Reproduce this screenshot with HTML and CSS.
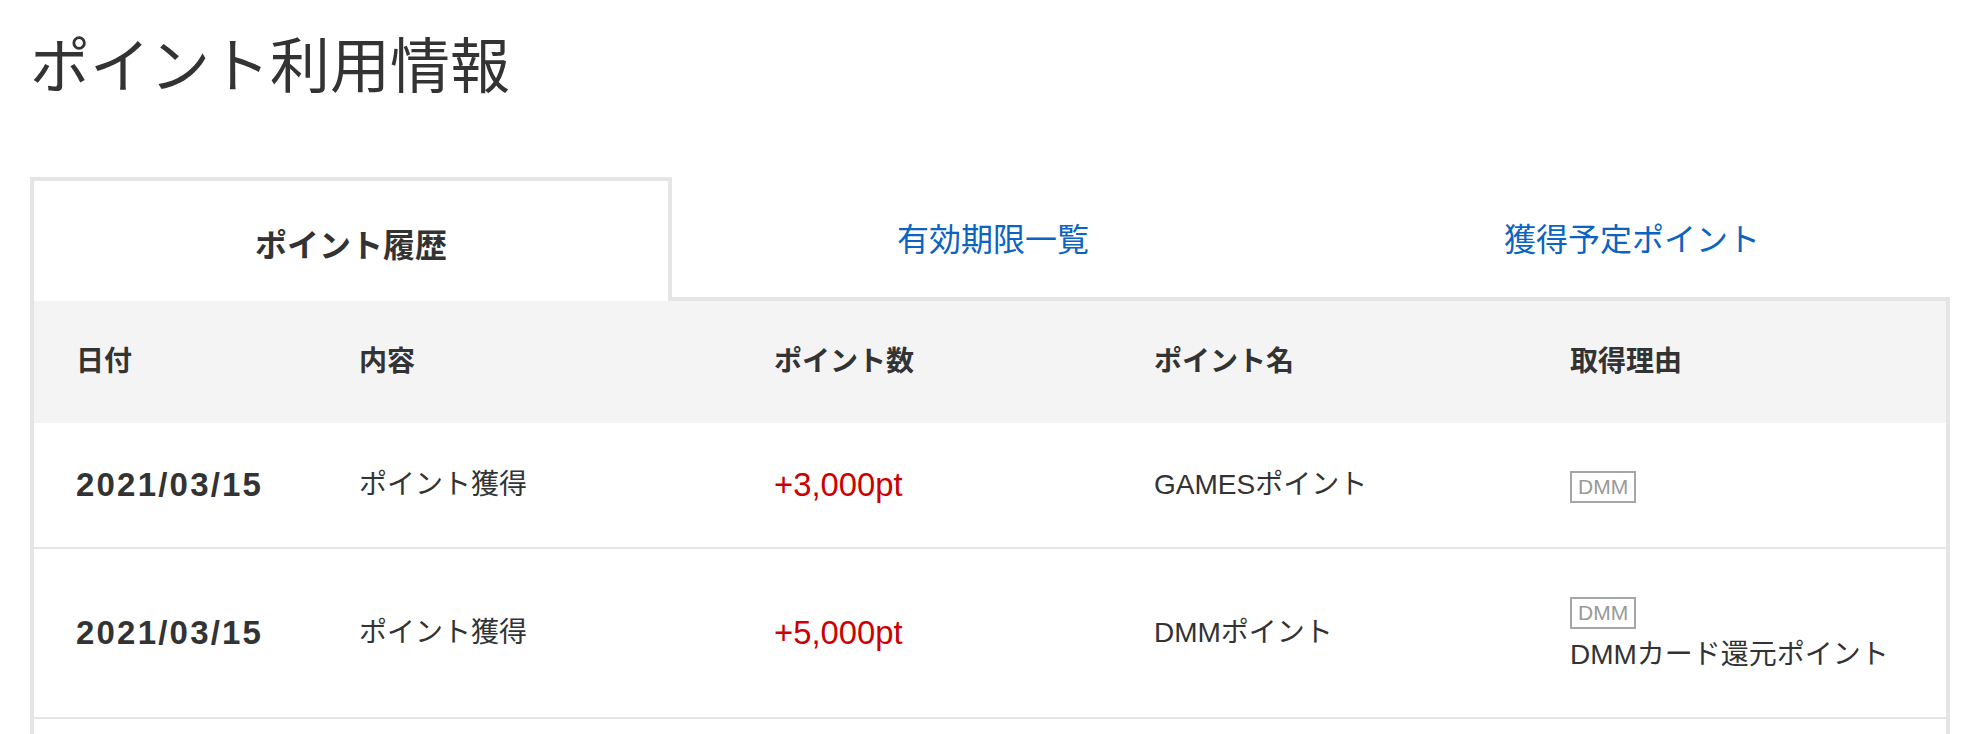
FILE: index.html
```html
<!DOCTYPE html>
<html lang="ja">
<head>
<meta charset="utf-8">
<title>ポイント利用情報</title>
<link rel="stylesheet" href="styles.css">
</head>
<body>
<main class="page">
  <h1 class="title">ポイント利用情報</h1>
  <nav class="tabs">
    <div class="tab tab-active">ポイント履歴</div>
    <a class="tab" href="#">有効期限一覧</a>
    <a class="tab tab-last" href="#">獲得予定ポイント</a>
  </nav>
  <div class="panel">
    <table class="history">
      <colgroup>
        <col class="c-date">
        <col class="c-desc">
        <col class="c-pts">
        <col class="c-name">
        <col class="c-reason">
      </colgroup>
      <thead>
        <tr>
          <th>日付</th>
          <th>内容</th>
          <th>ポイント数</th>
          <th>ポイント名</th>
          <th>取得理由</th>
        </tr>
      </thead>
      <tbody>
        <tr>
          <td class="date">2021/03/15</td>
          <td>ポイント獲得</td>
          <td class="pts">+3,000pt</td>
          <td>GAMESポイント</td>
          <td><span class="badge">DMM</span></td>
        </tr>
        <tr>
          <td class="date">2021/03/15</td>
          <td>ポイント獲得</td>
          <td class="pts">+5,000pt</td>
          <td>DMMポイント</td>
          <td><div class="badge-line"><span class="badge">DMM</span></div>DMMカード還元ポイント</td>
        </tr>
      </tbody>
    </table>
  </div>
</main>
</body>
</html>
```

FILE: styles.css
```css
* {
  box-sizing: border-box;
}

html, body {
  margin: 0;
  padding: 0;
  background: #fff;
}

body {
  font-family: "Liberation Sans", "Noto Sans CJK JP", sans-serif;
  color: #333;
  overflow: hidden;
}

.page {
  width: 1920px;
  margin-left: 30px;
}

.title {
  margin: 23px 0 64px 0;
  font-size: 60px;
  line-height: 90px;
  font-weight: 400;
  color: #333;
}

.tabs {
  display: flex;
  height: 124px;
}

.tab {
  flex: 0 0 642px;
  display: flex;
  align-items: center;
  justify-content: center;
  font-size: 32px;
  color: #0b63c2;
  text-decoration: none;
  border-bottom: 4px solid #e5e5e5;
}

.tab-last {
  flex: 1 1 auto;
}

.tab-active {
  color: #333;
  font-weight: 700;
  border: 4px solid #e5e5e5;
  border-bottom: none;
  padding-top: 4px;
}

.panel {
  border-left: 4px solid #e5e5e5;
  border-right: 4px solid #e5e5e5;
  padding-bottom: 60px;
}

.history {
  width: 100%;
  border-collapse: collapse;
  table-layout: fixed;
}

.c-date { width: 283px; }
.c-desc { width: 415px; }
.c-pts { width: 380px; }
.c-name { width: 416px; }
.c-reason { width: 418px; }

.history th {
  background: #f4f4f4;
  text-align: left;
  font-size: 28px;
  font-weight: 700;
  line-height: 40px;
  padding: 41px 0 41px 42px;
  color: #333;
}

.history td {
  font-size: 28px;
  line-height: 40px;
  padding: 42px 0 42px 42px;
  vertical-align: middle;
  border-bottom: 2px solid #e5e5e5;
  color: #333;
  white-space: nowrap;
}

.history td.date {
  font-size: 33px;
  font-weight: 700;
  letter-spacing: 2.2px;
}

.history td.pts {
  font-size: 32.8px;
  color: #cc0000;
}

.badge-line {
  display: flex;
  align-items: center;
  height: 44px;
}

.badge {
  display: inline-block;
  vertical-align: middle;
  font-size: 21px;
  line-height: 28px;
  padding: 0 6px;
  border: 2px solid #a6a6a6;
  color: #999;
}
```
